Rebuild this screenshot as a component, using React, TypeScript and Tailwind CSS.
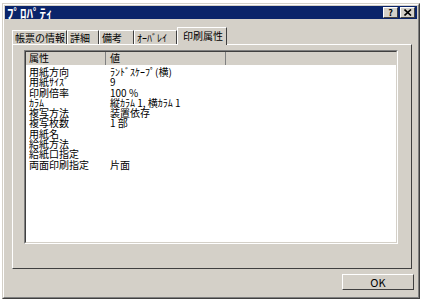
import React from "react";

const rows: [string, string][] = [
  ["用紙方向", "ﾗﾝﾄﾞｽｹｰﾌﾟ(横)"],
  ["用紙ｻｲｽﾞ", "9"],
  ["印刷倍率", "100 %"],
  ["ｶﾗﾑ", "縦ｶﾗﾑ 1, 横ｶﾗﾑ 1"],
  ["複写方法", "装置依存"],
  ["複写枚数", "1 部"],
  ["用紙名", ""],
  ["給紙方法", ""],
  ["給紙口指定", ""],
  ["両面印刷指定", "片面"],
];

const tabs: [string, string][] = [
  ["帳票の情報", "w-[55px]"],
  ["詳細", "w-[32px]"],
  ["備考", "w-[35px]"],
  ["ｵｰﾊﾞﾚｲ", "w-[43px]"],
];

const font = { fontFamily: '"MS UI Gothic", "Noto Sans CJK JP", sans-serif' };

export default function App() {
  return (
    <div className="w-[427px] h-[302px] bg-white pt-[3px] pl-[2px]" style={font}>
      <div className="w-[418px] h-[296px] bg-[#d4d0c8] border border-t-[#d4d0c8] border-l-[#d4d0c8] border-r-[#404040] border-b-[#404040]">
        <div className="h-full border border-t-white border-l-white border-r-[#808080] border-b-[#808080] p-[1px] flex flex-col">
          {/* title bar */}
          <div className="h-[13px] bg-[#0a246a] flex items-center justify-between pl-[2px] pr-[2px]">
            <span className="text-white font-bold text-[13px] leading-none">ﾌﾟﾛﾊﾟﾃｨ</span>
            <div className="flex gap-[2px]">
              <div className="w-[15px] h-[11px] bg-[#d4d0c8] border border-t-white border-l-white border-r-[#404040] border-b-[#404040] flex items-center justify-center text-[9px] font-bold leading-none text-black">?</div>
              <div className="w-[15px] h-[11px] bg-[#d4d0c8] border border-t-white border-l-white border-r-[#404040] border-b-[#404040] flex items-center justify-center">
                <svg width="8" height="7" viewBox="0 0 8 7">
                  <path d="M0.5 0.5 L7 6.5 M7 0.5 L0.5 6.5" stroke="black" strokeWidth="1.6" />
                </svg>
              </div>
            </div>
          </div>
          {/* tabs */}
          <div className="flex items-end h-[25px] pl-[7px]">
            {tabs.map(([t, w]) => (
              <div
                key={t}
                className={`${w} h-[15px] pl-[2px] text-[10px] leading-[14px] text-black whitespace-nowrap overflow-hidden border-t border-l border-t-white border-l-white border-r border-r-[#404040] -mb-px`}
              >
                {t}
              </div>
            ))}
            <div className="w-[50px] h-[18px] pl-[5px] text-[10px] leading-[16px] text-black bg-[#d4d0c8] border-t border-l border-t-white border-l-white border-r border-r-[#404040] relative z-10 -mb-px whitespace-nowrap">
              印刷属性
            </div>
          </div>
          {/* panel */}
          <div className="ml-[7px] w-[400px] h-[225px] border border-t-white border-l-white border-r-[#404040] border-b-[#404040] pt-[5px] pl-[11px]">
            <div className="w-[374px] h-[194px] bg-white border border-t-[#808080] border-l-[#808080] border-r-white border-b-white">
              <div className="h-full border border-t-[#404040] border-l-[#404040] border-r-[#d4d0c8] border-b-[#d4d0c8] flex flex-col">
                <div className="flex h-[13px] bg-[#d4d0c8] text-[10px] leading-[12px] text-black">
                  <div className="w-[80px] pl-[3px] border-r border-r-[#808080]">属性</div>
                  <div className="w-[120px] pl-[4px] border-r border-r-[#808080]">値</div>
                  <div className="flex-1"></div>
                </div>
                <div className="flex flex-col pt-[2px]">
                  {rows.map(([k, v]) => (
                    <div key={k} className="flex h-[10.3px] text-[10px] leading-[10px] text-black">
                      <div className="w-[80px] pl-[3px] whitespace-nowrap">{k}</div>
                      <div className="pl-[4px] whitespace-nowrap">{v}</div>
                    </div>
                  ))}
                </div>
              </div>
            </div>
          </div>
          {/* bottom */}
          <div className="flex justify-end pr-[3px] pt-[5px]">
            <div className="w-[72px] h-[16px] border border-t-white border-l-white border-r-[#404040] border-b-[#404040] flex items-center justify-center text-[11px] text-black leading-none">
              OK
            </div>
          </div>
        </div>
      </div>
    </div>
  );
}
